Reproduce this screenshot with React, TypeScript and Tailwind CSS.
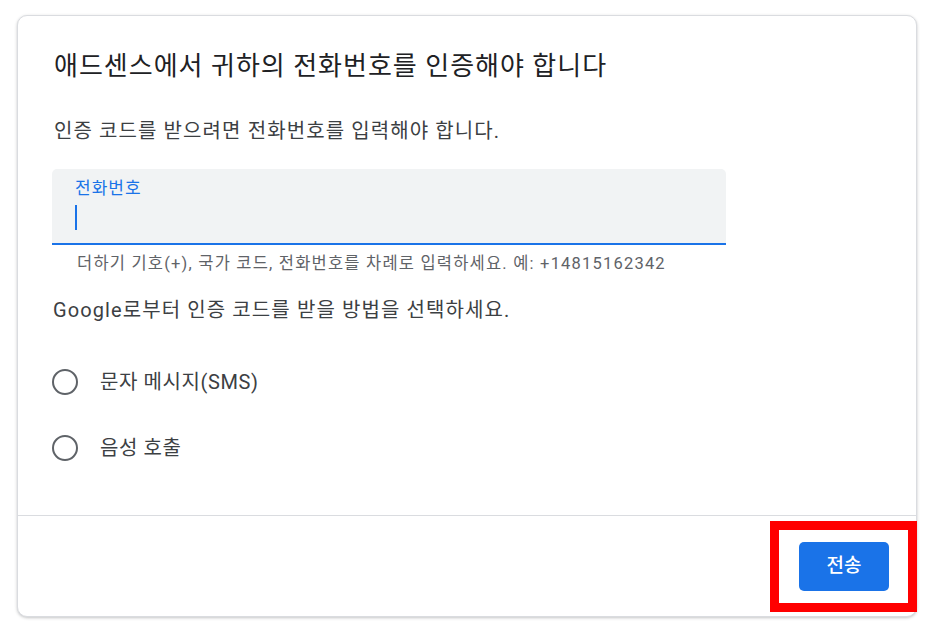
import React from 'react'

function Radio({ label }: { label: string }) {
  return (
    <label className="flex items-center h-[26px]">
      <span className="w-[26px] h-[26px] rounded-full border-[2.5px] border-[#5f6368] shrink-0" />
      <span className="ml-[22px] text-[20px] tracking-[0.6px] text-[#3c4043]">{label}</span>
    </label>
  )
}

export default function App() {
  return (
    <div
      className="relative w-[936px] h-[633px] bg-white"
      style={{ fontFamily: "Roboto, 'Noto Sans CJK KR', sans-serif" }}
    >
      <div className="absolute left-[17px] top-[15px] w-[900px] h-[602px] rounded-[10px] bg-white border border-[#dadce0] shadow-[0_1px_3px_rgba(60,64,67,0.3)] flex flex-col">
        {/* body */}
        <div className="flex-1 pl-[34px] pr-[36px] pt-[32px]">
          <h1 className="pl-[2px] text-[26px] leading-[36px] tracking-[1px] text-[#202124]">
            애드센스에서 귀하의 전화번호를 인증해야 합니다
          </h1>
          <p className="pl-[2px] mt-[34px] text-[20px] leading-[26px] tracking-[1.1px] text-[#3c4043]">
            인증 코드를 받으려면 전화번호를 입력해야 합니다.
          </p>

          {/* phone input */}
          <div className="mt-[25px] w-[674px]">
            <div className="h-[76px] bg-[#f1f3f4] rounded-t-[5px] border-b-2 border-[#1a73e8] pl-[23px] pt-[8px]">
              <div className="text-[17px] leading-[22px] tracking-[1px] text-[#1a73e8]">전화번호</div>
              <div className="mt-[6px] w-[2px] h-[25px] bg-[#1a73e8]" />
            </div>
            <div className="pl-[25px] mt-[8px] text-[16.5px] leading-[22px] tracking-[1.2px] text-[#5f6368]">
              더하기 기호(+), 국가 코드, 전화번호를 차례로 입력하세요. 예: +14815162342
            </div>
          </div>

          <p className="pl-[1px] mt-[22px] text-[20px] leading-[26px] tracking-[1.1px] text-[#3c4043]">
            Google로부터 인증 코드를 받을 방법을 선택하세요.
          </p>

          <div className="mt-[46px] flex flex-col gap-[40px]">
            <Radio label="문자 메시지(SMS)" />
            <Radio label="음성 호출" />
          </div>
        </div>

        {/* footer */}
        <div className="h-[101px] border-t border-[#dadce0] flex items-center justify-end pr-[27px]">
          <button className="w-[90px] h-[49px] rounded-[5px] bg-[#1a73e8] text-white text-[19px] font-medium">
            전송
          </button>
        </div>
      </div>

      {/* highlight annotation */}
      <div className="absolute left-[770px] top-[521px] w-[147px] h-[91px] border-[9px] border-[#ff0000]" />
    </div>
  )
}
